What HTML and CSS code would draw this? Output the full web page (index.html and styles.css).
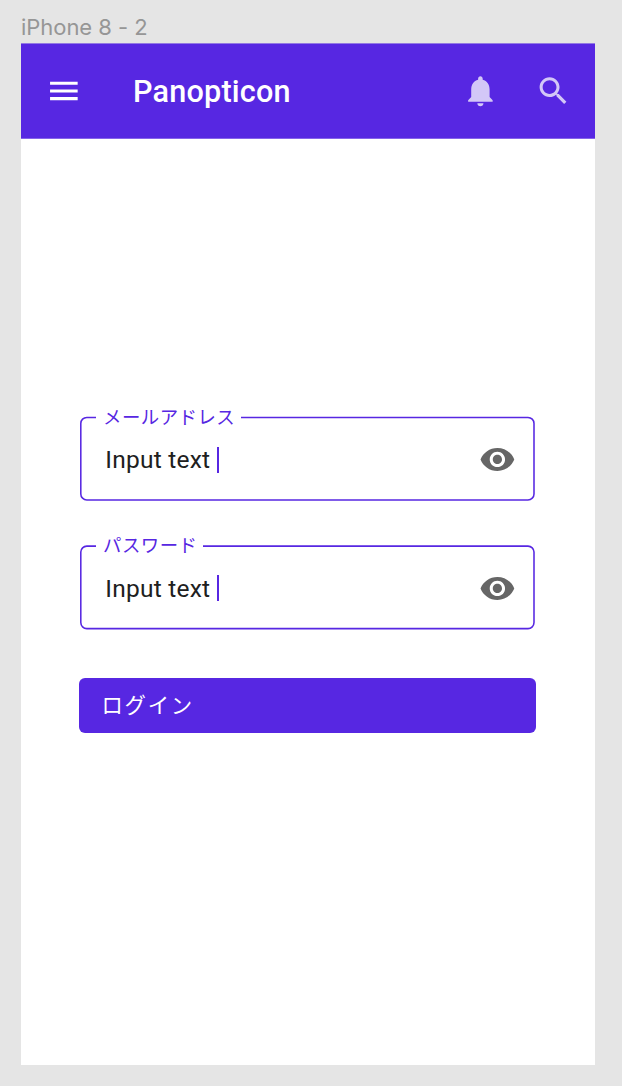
FILE: index.html
```html
<!DOCTYPE html>
<html lang="ja">
<head>
<meta charset="utf-8">
<title>Panopticon</title>
<link rel="stylesheet" href="styles.css">
</head>
<body>
<div class="frame-name">iPhone 8 - 2</div>
<main class="frame">
  <header class="app-bar">
    <svg class="icon" viewBox="0 0 24 24"><path d="M3.3 17.7h18v-2h-18v2zm0-5h18v-2h-18v2zm0-7v2h18v-2h-18z"/></svg>
    <h1 class="title">Panopticon</h1>
    <div class="actions">
      <svg class="icon" viewBox="0 0.3 24 24"><path d="M12 22c1.1 0 2-.9 2-2h-4c0 1.1.89 2 2 2zm6-6v-5c0-3.07-1.64-5.64-4.5-6.32V4c0-.83-.67-1.5-1.5-1.5s-1.5.67-1.5 1.5v.68C7.63 5.36 6 7.92 6 11v5l-2 2v1h16v-1l-2-2z"/></svg>
      <svg class="icon" viewBox="0 0.3 24 24"><path d="M15.5 14h-.79l-.28-.27C15.41 12.59 16 11.11 16 9.5 16 5.91 13.09 3 9.5 3S3 5.91 3 9.5 5.91 16 9.5 16c1.61 0 3.09-.59 4.23-1.57l.27.28v.79l5 4.99L20.49 19l-4.99-5zm-6 0C7.01 14 5 11.99 5 9.5S7.01 5 9.5 5 14 7.01 14 9.5 11.99 14 9.5 14z"/></svg>
    </div>
  </header>
  <form class="login">
    <div class="field">
      <svg class="outline" viewBox="0 0 456 85"><rect x="0.8" y="1.4" width="453.2" height="82.5" rx="6"/></svg>
      <span class="label">メールアドレス</span>
      <span class="value">Input text</span>
      <span class="caret"></span>
      <svg class="icon eye" viewBox="0 0 24 24"><path d="M12 4.5C7 4.5 2.73 7.61 1 12c1.73 4.39 6 7.5 11 7.5s9.27-3.11 11-7.5c-1.73-4.39-6-7.5-11-7.5zM12 17c-2.76 0-5-2.24-5-5s2.24-5 5-5 5 2.24 5 5-2.24 5-5 5zm0-8c-1.66 0-3 1.34-3 3s1.34 3 3 3 3-1.34 3-3-1.34-3-3-3z"/></svg>
    </div>
    <div class="field">
      <svg class="outline" viewBox="0 0 456 85"><rect x="0.8" y="1.1" width="453.2" height="82.5" rx="6"/></svg>
      <span class="label label-short">パスワード</span>
      <span class="value">Input text</span>
      <span class="caret"></span>
      <svg class="icon eye" viewBox="0 0 24 24"><path d="M12 4.5C7 4.5 2.73 7.61 1 12c1.73 4.39 6 7.5 11 7.5s9.27-3.11 11-7.5c-1.73-4.39-6-7.5-11-7.5zM12 17c-2.76 0-5-2.24-5-5s2.24-5 5-5 5 2.24 5 5-2.24 5-5 5zm0-8c-1.66 0-3 1.34-3 3s1.34 3 3 3 3-1.34 3-3-1.34-3-3-3z"/></svg>
    </div>
    <button class="submit" type="button">ログイン</button>
  </form>
</main>
</body>
</html>
```
FILE: styles.css
```css
* { box-sizing: border-box; }

body {
  margin: 0;
  height: 1086px;
  padding-left: 21px;
  overflow: hidden;
  background: #e5e5e5;
  font-family: Roboto, "Noto Sans CJK JP", sans-serif;
}

.frame-name {
  height: 43px;
  padding-top: 13px;
  font: 22px/29px Inter, sans-serif;
  letter-spacing: -0.05px;
  color: #969696;
}

.frame {
  width: 574.4px;
  height: 1022px;
  background: #fff;
}

.app-bar {
  display: flex;
  align-items: center;
  height: 96px;
  padding: 0 23.9px 0 24px;
  border-top: 1px solid #9379e3;
  border-bottom: 1px solid #8663ea;
  background: #5727e2;
  color: #fff;
}

.icon {
  display: block;
  flex: none;
  width: 36.8px;
  height: 36.8px;
  fill: currentColor;
}

.title {
  margin: 0 0 0 51.2px;
  font-size: 30.6px;
  font-weight: 500;
  line-height: 37px;
  letter-spacing: 0.2px;
}

.actions {
  display: flex;
  gap: 36.4px;
  margin-left: auto;
  opacity: 0.74;
}

.login {
  display: flex;
  flex-direction: column;
  padding: 277px 0 0 59px;
}

.field {
  position: relative;
  display: flex;
  align-items: center;
  width: 456px;
  height: 85px;
  margin-bottom: 43.7px;
  padding: 2px 20.5px 0 25.3px;
}

.outline {
  position: absolute;
  inset: 0;
  width: 456px;
  height: 85px;
  fill: none;
  stroke: #5727e2;
  stroke-width: 1.55;
}

.label {
  position: absolute;
  left: 16px;
  top: -12.4px;
  width: 145px;
  padding-left: 7px;
  background: #fff;
  color: #5727e2;
  font-size: 18.4px;
  line-height: 27px;
  letter-spacing: 0.5px;
  white-space: nowrap;
}

.label-short {
  top: -13px;
  width: 106.5px;
}

.value {
  color: #202020;
  font-size: 24.5px;
  line-height: 37px;
  letter-spacing: 0.23px;
}

.caret {
  width: 1.5px;
  height: 26px;
  margin-left: 6.8px;
  background: #5727e2;
}

.eye {
  margin-left: auto;
  color: #666;
}

.submit {
  width: 457px;
  height: 55px;
  margin: 5px 0 0 -1px;
  padding: 0 0 3px 22.5px;
  border: 0;
  border-radius: 6px;
  background: #5727e2;
  color: #fff;
  font: 400 21.4px/28px "Noto Sans CJK JP", sans-serif;
  letter-spacing: 1.7px;
  text-align: left;
}
```
